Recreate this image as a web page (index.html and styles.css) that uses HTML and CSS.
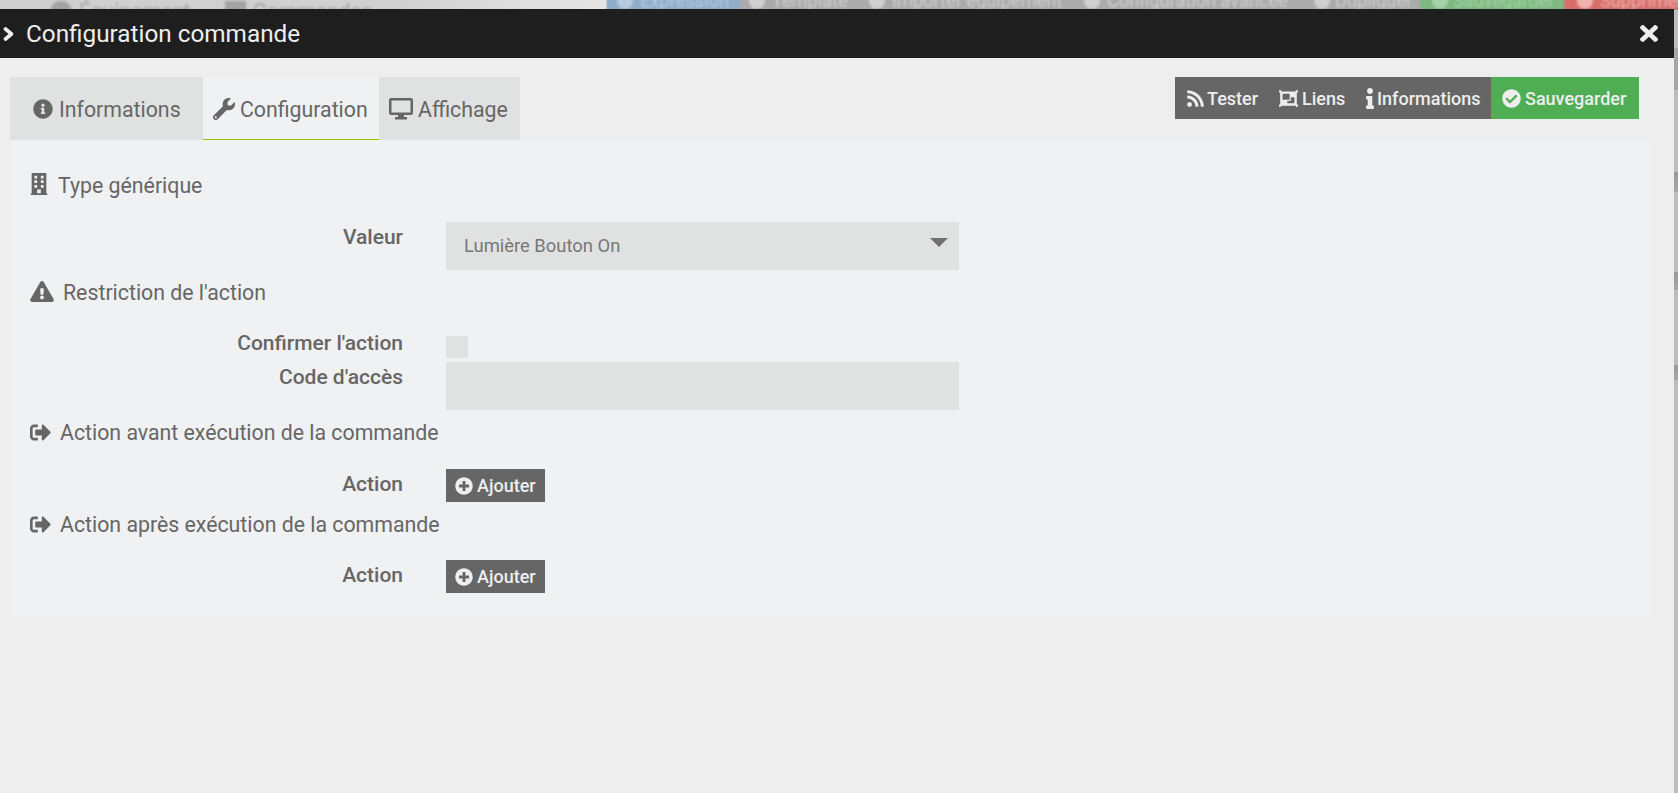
FILE: index.html
```html
<!DOCTYPE html>
<html lang="fr">
<head>
<meta charset="utf-8">
<title>Configuration commande</title>
<link rel="stylesheet" href="styles.css">
</head>
<body>
<svg class="sprite" xmlns="http://www.w3.org/2000/svg" aria-hidden="true">
  <symbol id="i-signout" viewBox="0 50 512 412" preserveAspectRatio="none"><path d="M497 273L329 441c-15 15-41 4.500-41-17v-96H152c-13.300 0-24-10.700-24-24v-96c0-13.300 10.700-24 24-24h136V88c0-21.400 25.900-32 41-17l168 168c9.300 9.400 9.300 24.600 0 34zM192 436v-40c0-6.600-5.400-12-12-12H96c-17.700 0-32-14.300-32-32V160c0-17.700 14.300-32 32-32h84c6.600 0 12-5.400 12-12V76c0-6.600-5.400-12-12-12H96c-53 0-96 43-96 96v192c0 53 43 96 96 96h84c6.600 0 12-5.400 12-12z"/></symbol>
  <symbol id="i-plus" viewBox="0 0 512 512"><path d="M256 8C119 8 8 119 8 256s111 248 248 248 248-111 248-248S393 8 256 8zm144 276c0 6.600-5.400 12-12 12h-92v92c0 6.600-5.400 12-12 12h-56c-6.600 0-12-5.400-12-12v-92h-92c-6.600 0-12-5.400-12-12v-56c0-6.600 5.400-12 12-12h92v-92c0-6.600 5.400-12 12-12h56c6.600 0 12 5.400 12 12v92h92c6.600 0 12 5.400 12 12v56z"/></symbol>
</svg>

<div class="backdrop">
  <div class="back-tabs">
    <span class="back-item back-equip"><i class="back-dot"></i>Équipement</span>
    <span class="back-item back-cmd"><i class="back-square"></i>Commandes</span>
  </div>
  <div class="back-actions">
    <span class="back-btn back-blue"><i class="back-dot"></i>Expression</span>
    <span class="back-btn back-template"><i class="back-dot"></i>Template</span>
    <span class="back-btn back-import"><i class="back-dot"></i>Importer équipement</span>
    <span class="back-btn back-adv"><i class="back-dot"></i>Configuration avancée</span>
    <span class="back-btn back-dup"><i class="back-dot"></i>Dupliquer</span>
    <span class="back-btn back-green"><i class="back-dot"></i>Sauvegarder</span>
    <span class="back-btn back-red"><i class="back-dot"></i>Supprimer</span>
  </div>
</div>
<div class="back-edge"></div>

<main class="modal">
  <header class="modal-head">
    <svg class="chevron" viewBox="0 0 11 14"><path d="M2.500 2 L8.500 7 L2.500 12"/></svg>
    <h1 class="modal-title">Configuration commande</h1>
    <svg class="ico close" viewBox="0 80 352 352" preserveAspectRatio="none"><path d="M242.720 256l100.070-100.070c12.280-12.280 12.280-32.190 0-44.480l-22.240-22.240c-12.280-12.280-32.190-12.280-44.480 0L176 189.280 75.930 89.210c-12.280-12.280-32.190-12.280-44.480 0L9.210 111.450c-12.280 12.280-12.280 32.190 0 44.480L109.280 256 9.210 356.070c-12.280 12.280-12.280 32.190 0 44.480l22.240 22.240c12.280 12.280 32.200 12.280 44.480 0L176 322.720l100.070 100.070c12.280 12.280 32.200 12.280 44.480 0l22.240-22.240c12.280-12.280 12.280-32.190 0-44.480L242.720 256z"/></svg>
  </header>

  <div class="modal-body">
    <div class="topbar">
      <nav class="tabs">
        <a class="tab tab-info">
          <svg class="ico tab-ico" viewBox="0 0 512 512"><path d="M256 8C119.043 8 8 119.083 8 256c0 136.997 111.043 248 248 248s248-111.003 248-248C504 119.083 392.957 8 256 8zm0 110c23.196 0 42 18.804 42 42s-18.804 42-42 42-42-18.804-42-42 18.804-42 42-42zm56 254c0 6.627-5.373 12-12 12h-88c-6.627 0-12-5.373-12-12v-24c0-6.627 5.373-12 12-12h12v-64h-12c-6.627 0-12-5.373-12-12v-24c0-6.627 5.373-12 12-12h64c6.627 0 12 5.373 12 12v100h12c6.627 0 12 5.373 12 12v24z"/></svg>
          Informations
        </a>
        <a class="tab tab-config active">
          <svg class="ico tab-ico wrench" viewBox="0 0 512 512"><path d="M507.730 109.100c-2.240-9.030-13.540-12.090-20.120-5.510l-74.360 74.360-67.880-11.310-11.310-67.880 74.360-74.360c6.620-6.620 3.430-17.900-5.660-20.160-47.380-11.740-99.550.91-136.580 37.930-39.640 39.640-50.550 97.100-34.050 147.200L18.740 402.760c-24.990 24.990-24.990 65.510 0 90.500 24.990 24.990 65.510 24.990 90.500 0l213.210-213.210c50.120 16.710 107.470 5.680 147.370-34.220 37.070-37.070 49.700-89.320 37.910-136.730zM64 472c-13.250 0-24-10.750-24-24 0-13.260 10.750-24 24-24s24 10.740 24 24c0 13.250-10.750 24-24 24z"/></svg>
          Configuration
        </a>
        <a class="tab tab-display">
          <svg class="ico tab-ico desktop" viewBox="0 0 24 22"><path fill-rule="evenodd" d="M2 0h20a2 2 0 0 1 2 2v13a2 2 0 0 1-2 2h-7v2h3v2.500H6V19h3v-2H2a2 2 0 0 1-2-2V2a2 2 0 0 1 2-2zm.5 2.500v12h19v-12z"/></svg>
          Affichage
        </a>
      </nav>
      <div class="actions">
        <button class="btn btn-tester">
          <svg class="ico btn-ico" viewBox="0 0 448 512"><path d="M128.081 415.959c0 35.369-28.672 64.041-64.041 64.041S0 451.328 0 415.959s28.672-64.041 64.041-64.041 64.040 28.673 64.040 64.041zm175.660 47.250c-8.354-154.600-132.185-278.587-286.950-286.950C7.656 175.765 0 183.105 0 192.253v48.069c0 8.415 6.490 15.472 14.887 16.018 111.832 7.284 201.473 96.702 208.772 208.772.547 8.397 7.604 14.887 16.018 14.887h48.069c9.149.001 16.489-7.655 15.995-16.790zm144.249.288C439.596 229.677 251.465 40.445 16.503 32.010 7.473 31.686 0 38.981 0 48.016v48.068c0 8.625 6.835 15.645 15.453 15.999 191.179 7.839 344.627 161.316 352.465 352.465.353 8.618 7.373 15.453 15.999 15.453h48.068c9.034-.001 16.329-7.474 16.005-16.504z"/></svg>
          Tester
        </button>
        <button class="btn btn-liens">
          <svg class="ico btn-ico links" viewBox="0 32 512 448"><path d="M480 128V96h20c6.627 0 12-5.373 12-12V44c0-6.627-5.373-12-12-12h-40c-6.627 0-12 5.373-12 12v20H64V44c0-6.627-5.373-12-12-12H12C5.373 32 0 37.373 0 44v40c0 6.627 5.373 12 12 12h20v320H12c-6.627 0-12 5.373-12 12v40c0 6.627 5.373 12 12 12h40c6.627 0 12-5.373 12-12v-20h384v20c0 6.627 5.373 12 12 12h40c6.627 0 12-5.373 12-12v-40c0-6.627-5.373-12-12-12h-20V128zM96 276V140c0-6.627 5.373-12 12-12h168c6.627 0 12 5.373 12 12v136c0 6.627-5.373 12-12 12H108c-6.627 0-12-5.373-12-12zm320 96c0 6.627-5.373 12-12 12H236c-6.627 0-12-5.373-12-12v-52h72c13.255 0 24-10.745 24-24v-72h84c6.627 0 12 5.373 12 12v136z"/></svg>
          Liens
        </button>
        <button class="btn btn-info">
          <svg class="ico btn-ico info" viewBox="0 0 192 512"><path d="M20 424.229h20V279.771H20c-11.046 0-20-8.954-20-20V212c0-11.046 8.954-20 20-20h112c11.046 0 20 8.954 20 20v212.229h20c11.046 0 20 8.954 20 20V492c0 11.046-8.954 20-20 20H20c-11.046 0-20-8.954-20-20v-47.771c0-11.046 8.954-20 20-20zM96 0C56.235 0 24 32.235 24 72s32.235 72 72 72 72-32.235 72-72S135.764 0 96 0z"/></svg>
          Informations
        </button>
        <button class="btn btn-save">
          <svg class="ico btn-ico" viewBox="0 0 512 512"><path d="M504 256c0 136.967-111.033 248-248 248S8 392.967 8 256 119.033 8 256 8s248 111.033 248 248zM227.314 387.314l184-184c6.248-6.248 6.248-16.379 0-22.627l-22.627-22.627c-6.248-6.249-16.379-6.249-22.628 0L216 308.118l-70.059-70.059c-6.248-6.248-16.379-6.248-22.628 0l-22.627 22.627c-6.248 6.248-6.248 16.379 0 22.627l104 104c6.249 6.250 16.379 6.250 22.628.001z"/></svg>
          Sauvegarder
        </button>
      </div>
    </div>

    <section class="panel">
      <h2 class="legend legend-type">
        <svg class="ico leg-ico building" viewBox="0 0 18 24"><path fill-rule="evenodd" d="M1 0h16v22h1v2H0v-2h1zM4 3v3h3V3zm7 0v3h3V3zM4 8v3h3V8zm7 0v3h3V8zM4 13v3h3v-3zm7 0v3h3v-3zM7 18v4h4v-4z"/></svg>
        Type générique
      </h2>
      <div class="row">
        <label class="row-label">Valeur</label>
        <div class="select">Lumière Bouton On<i class="select-caret"></i></div>
      </div>

      <h2 class="legend legend-restrict">
        <svg class="ico leg-ico warn" viewBox="0 0 576 512"><path d="M569.517 440.013C587.975 472.007 564.806 512 527.940 512H48.054c-36.937 0-59.999-40.055-41.577-71.987L246.423 23.985c18.467-32.009 64.720-31.951 83.154 0l239.940 416.028zM288 354c-25.405 0-46 20.595-46 46s20.595 46 46 46 46-20.595 46-46-20.595-46-46-46zm-43.673-165.346l7.418 136c.347 6.364 5.609 11.346 11.982 11.346h48.546c6.373 0 11.635-4.982 11.982-11.346l7.418-136c.375-6.874-5.098-12.654-11.982-12.654h-63.383c-6.884 0-12.356 5.780-11.981 12.654z"/></svg>
        Restriction de l'action
      </h2>
      <div class="row row-check">
        <label class="row-label row-label-flush">Confirmer l'action</label>
        <span class="checkbox"></span>
      </div>
      <div class="row row-code">
        <label class="row-label">Code d'accès</label>
        <div class="input"></div>
      </div>

      <h2 class="legend legend-before">
        <svg class="ico leg-ico signout"><use href="#i-signout"/></svg>
        Action avant exécution de la commande
      </h2>
      <div class="row">
        <label class="row-label">Action</label>
        <button class="btn-add"><svg class="ico add-ico"><use href="#i-plus"/></svg>Ajouter</button>
      </div>

      <h2 class="legend legend-after">
        <svg class="ico leg-ico signout"><use href="#i-signout"/></svg>
        Action après exécution de la commande
      </h2>
      <div class="row">
        <label class="row-label">Action</label>
        <button class="btn-add"><svg class="ico add-ico"><use href="#i-plus"/></svg>Ajouter</button>
      </div>
    </section>
  </div>
</main>
</body>
</html>
```
FILE: styles.css
```css
* { box-sizing: border-box; }

html, body {
  margin: 0;
  height: 793px;
  overflow: hidden;
}

body {
  background: #bcbcbc;
  font-family: Roboto, "Liberation Sans", sans-serif;
  color: #666;
}

.sprite { display: none; }

.ico {
  fill: currentColor;
  display: block;
  flex: none;
}

/* blurred page behind the modal */
.backdrop {
  position: absolute;
  left: 0;
  top: 0;
  width: 1678px;
  height: 10px;
  overflow: hidden;
  background: #ababab;
}

.back-edge {
  position: absolute;
  right: 0;
  top: 48px;
  width: 4px;
  height: 745px;
  background: linear-gradient(180deg,
    #a6a6a6 0, #a6a6a6 42px, #bcbcbc 42px, #bcbcbc 124px,
    #9a9a9a 124px, #a8a8a8 144px, #bcbcbc 144px, #bcbcbc 224px,
    #9a9a9a 224px, #a8a8a8 242px, #bcbcbc 242px, #bcbcbc 317px,
    #9a9a9a 317px, #a8a8a8 332px, #bcbcbc 332px);
}

.back-tabs {
  position: absolute;
  left: 0;
  top: 0;
  height: 10px;
  width: 607px;
  background: linear-gradient(90deg, #cfcfcf, #d0d0d0 65%, #dedede 85%, #e4e4e4);
}

.back-item {
  position: absolute;
  top: -1px;
  display: flex;
  gap: 7px;
  align-items: flex-start;
  font-size: 21px;
  line-height: 24px;
  color: #a3a3a3;
  filter: blur(1px);
  white-space: nowrap;
}

.back-equip { left: 50px; }
.back-cmd { left: 225px; }

.back-dot {
  width: 16px;
  height: 16px;
  border-radius: 50%;
  background: currentColor;
  flex: none;
  margin-top: 2px;
}

.back-equip .back-dot {
  width: 22px;
  height: 22px;
}

.back-square {
  width: 21px;
  height: 22px;
  margin-top: 2px;
  background: currentColor;
  flex: none;
}

.back-actions {
  position: absolute;
  left: 607px;
  top: -9px;
  width: 1071px;
  display: flex;
  filter: blur(1px);
  color: #cfcfcf;
  font-size: 18.200px;
  line-height: 20px;
}

.back-btn {
  display: flex;
  align-items: center;
  gap: 7px;
  height: 20px;
  padding-left: 9px;
  white-space: nowrap;
  flex: none;
}

.back-btn .back-dot { margin-top: 0; }

.back-blue {
  background: #8facc9;
  color: #b6cbe0;
  padding-left: 10px;
  width: 133px;
}

.back-template { width: 120px; }
.back-import { width: 215px; }
.back-adv { width: 230px; }
.back-dup { width: 115px; gap: 5px; }

.back-green {
  background: #7eb981;
  color: #a5d2a8;
  padding-left: 12px;
  width: 144px;
  gap: 5px;
}

.back-red {
  background: #d86f6b;
  color: #eeb1ae;
  padding-left: 13px;
  width: 114px;
}

/* modal */
.modal {
  position: absolute;
  left: 0;
  top: 9px;
  width: 1674px;
  height: 784px;
  background: #eee;
  display: flex;
  flex-direction: column;
}

.modal-head {
  height: 49px;
  flex: none;
  background: #1e1e1e;
  color: #eee;
  display: flex;
  align-items: center;
  padding: 0 16px 0 3px;
}

.chevron {
  width: 11px;
  height: 14px;
  flex: none;
  fill: none;
  stroke: #eee;
  stroke-width: 3.600;
  stroke-linecap: round;
  stroke-linejoin: round;
}

.modal-title {
  margin: 0 0 0 12px;
  padding-top: 1px;
  font-size: 24.300px;
  font-weight: 400;
  line-height: 30px;
  flex: 1;
}

.close {
  width: 18px;
  height: 17px;
}

.modal-body {
  padding: 19px 23px 0 10px;
}

.topbar {
  display: flex;
  justify-content: space-between;
  align-items: flex-start;
  padding-right: 12px;
}

.tabs {
  display: flex;
  height: 63px;
}

.tab {
  display: flex;
  align-items: center;
  gap: 6px;
  height: 63px;
  padding-top: 1px;
  background: #e0e2e1;
  color: #666;
  font-size: 21.300px;
  white-space: nowrap;
}

.tab-info { width: 193px; padding-left: 23px; }
.tab-config { width: 176px; padding-left: 10px; gap: 5px; }
.tab-display { width: 141px; padding-left: 10px; gap: 5px; }

.tab.active {
  background: #f0f1f3;
  border-bottom: 1px solid #93ca02;
  padding-top: 2px;
}

.tab-ico {
  width: 20px;
  height: 20px;
}

.wrench {
  width: 22px;
  height: 22px;
}

.desktop {
  width: 24px;
  height: 22px;
}

.actions {
  display: flex;
  height: 42px;
}

.btn {
  display: flex;
  align-items: center;
  gap: 3px;
  height: 42px;
  border: 0;
  margin: 0;
  padding: 0;
  background: #666;
  color: #eee;
  font-family: inherit;
  font-size: 18px;
  font-weight: 500;
  white-space: nowrap;
  flex: none;
}

.btn-tester { width: 95px; padding-left: 11px; gap: 2px; }
.btn-liens { width: 86px; padding-left: 9px; gap: 4px; }
.btn-info { width: 135px; padding-left: 10px; }
.btn-save { width: 148px; padding-left: 11px; gap: 4px; background: #4fad54; }

.btn-ico {
  width: 19px;
  height: 19px;
}

.links { width: 19px; height: 17px; }
.info { width: 8px; height: 21px; }

.panel {
  height: 476px;
  padding: 33px 0 0;
  background: #f0f1f3;
}

.legend {
  display: flex;
  align-items: center;
  height: 24px;
  margin: 10px 0 0;
  padding-left: 20px;
  font-size: 21.300px;
  font-weight: 400;
  color: #666;
  white-space: nowrap;
}

.legend-type { margin: 0 0 25px; }
.legend-restrict { margin-bottom: 27px; }
.legend-before { margin-bottom: 25px; }
.legend-after { margin-bottom: 24px; }

.leg-ico { margin-right: 10px; }

.building { width: 18px; height: 22px; margin-top: -2px; }
.warn { width: 24px; height: 21px; margin-right: 9px; margin-top: -1px; }
.signout { width: 21px; height: 17px; margin-right: 9px; }

.row {
  display: grid;
  grid-template-columns: 393px 513px;
  column-gap: 43px;
  align-items: start;
}

.row-code { margin-top: 4px; }

.row-label {
  padding-top: 3px;
  line-height: 24px;
  font-size: 21px;
  font-weight: 500;
  text-align: right;
  color: #666;
}

.row-label-flush { padding-top: 0; }

.select, .input {
  height: 48px;
  background: #e0e2e1;
}

.select {
  display: flex;
  align-items: center;
  justify-content: space-between;
  padding: 0 11px 2px 18px;
  font-size: 18.400px;
  color: #777;
}

.select-caret {
  width: 0;
  height: 0;
  margin-top: -6px;
  border-left: 9px solid transparent;
  border-right: 9px solid transparent;
  border-top: 9px solid #707070;
}

.checkbox {
  display: block;
  width: 22px;
  height: 22px;
  margin-top: 5px;
  background: #e0e2e1;
}

.btn-add {
  display: flex;
  align-items: center;
  gap: 4px;
  width: 99px;
  height: 33px;
  padding: 0 0 0 9px;
  border: 0;
  background: #666;
  color: #eee;
  font-family: inherit;
  font-size: 18px;
  font-weight: 500;
  white-space: nowrap;
}

.add-ico {
  width: 18px;
  height: 18px;
}
```
